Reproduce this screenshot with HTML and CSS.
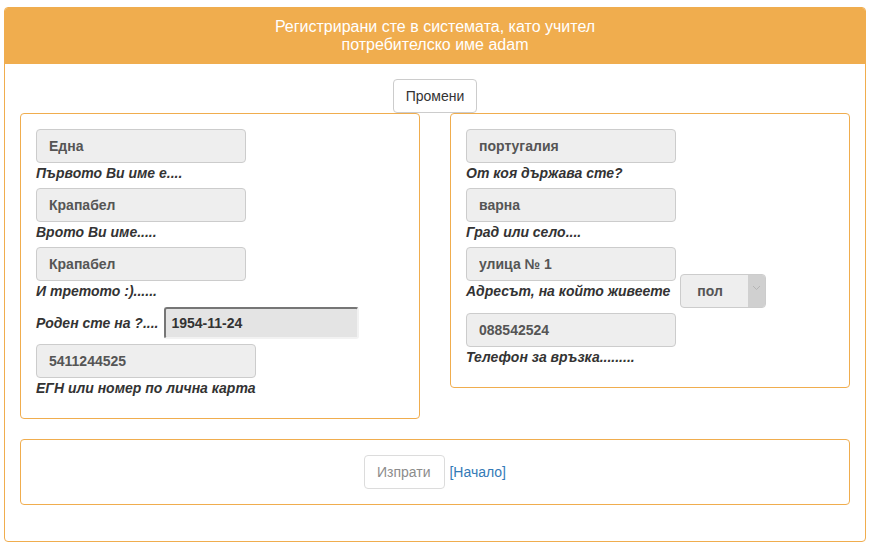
FILE: index.html
```html
<!DOCTYPE html>
<html lang="bg">
<head>
<meta charset="utf-8">
<title>Регистрация</title>
<link rel="stylesheet" href="styles.css">
</head>
<body>
<div class="panel">
  <div class="panel-heading">
    <h3 class="panel-title">Регистрирани сте в системата, като учител<br>потребителско име adam</h3>
  </div>
  <div class="panel-body">
    <div class="edit-row"><button class="btn" type="button">Промени</button></div>
    <div class="columns">
      <div class="box">
        <div class="group">
          <input class="field" type="text" value="Една" readonly>
          <label class="hint">Първото Ви име е....</label>
        </div>
        <div class="group">
          <input class="field" type="text" value="Крапабел" readonly>
          <label class="hint">Врото Ви име.....</label>
        </div>
        <div class="group">
          <input class="field" type="text" value="Крапабел" readonly>
          <label class="hint">И третото :)......</label>
        </div>
        <div class="group date-row">
          <label class="hint">Роден сте на ?....</label>
          <input class="date" type="text" value="1954-11-24" readonly>
        </div>
        <div class="group">
          <input class="field wide" type="text" value="5411244525" readonly>
          <label class="hint">ЕГН или номер по лична карта</label>
        </div>
      </div>
      <div class="box">
        <div class="group">
          <input class="field" type="text" value="португалия" readonly>
          <label class="hint">От коя държава сте?</label>
        </div>
        <div class="group">
          <input class="field" type="text" value="варна" readonly>
          <label class="hint">Град или село....</label>
        </div>
        <div class="group">
          <input class="field" type="text" value="улица № 1" readonly>
          <div class="address-row">
            <label class="hint">Адресът, на който живеете</label>
            <div class="select">
              <span class="select-value">пол</span>
              <span class="select-arrow"><svg width="9" height="6" viewBox="0 0 9 6"><path d="M1 1 L4.5 4.5 L8 1" fill="none" stroke="#b5b5b5" stroke-width="1"/></svg></span>
            </div>
          </div>
        </div>
        <div class="group">
          <input class="field" type="text" value="088542524" readonly>
          <label class="hint">Телефон за връзка.........</label>
        </div>
      </div>
    </div>
    <div class="box actions">
      <button class="btn btn-disabled" type="button">Изпрати</button> <a class="link" href="#">[Начало]</a>
    </div>
  </div>
</div>
</body>
</html>
```
FILE: styles.css
```css
* { box-sizing: border-box; }
html, body { margin: 0; background: #fff; }
body {
  padding: 7px 0 0 4px;
  font-family: "Liberation Sans", Arial, sans-serif;
  font-size: 14px;
  line-height: 20px;
  color: #333;
}
.panel {
  width: 862px;
  border: 1px solid #f0ad4e;
  border-radius: 4px;
  background: #fff;
}
.panel-heading {
  background: #f0ad4e;
  padding: 10px 15px 11px;
  border-radius: 3px 3px 0 0;
  text-align: center;
}
.panel-title {
  margin: 0;
  font-size: 16px;
  font-weight: normal;
  line-height: 1.1;
  color: #fff;
}
.panel-body {
  padding: 15px;
}
.edit-row {
  display: flex;
  justify-content: center;
}
.btn {
  font-family: "Liberation Sans", Arial, sans-serif;
  font-size: 14px;
  line-height: 20px;
  height: 34px;
  padding: 6px 12px;
  background: #fff;
  color: #333;
  border: 1px solid #ccc;
  border-radius: 4px;
  cursor: pointer;
}
.btn-disabled {
  color: #8c8c8c;
  border-color: #dcdcdc;
  padding: 6px 13px 6px 12px;
  cursor: not-allowed;
}
.columns {
  display: grid;
  grid-template-columns: 400px 400px;
  justify-content: space-between;
  align-items: start;
}
.box {
  border: 1px solid #f0ad4e;
  border-radius: 4px;
  padding: 15px;
}
.group {
  margin-bottom: 5px;
}
.field {
  display: block;
  width: 210px;
  height: 34px;
  padding: 6px 12px;
  font-family: "Liberation Sans", Arial, sans-serif;
  font-size: 14px;
  font-weight: bold;
  line-height: 20px;
  color: #555;
  background: #eee;
  border: 1px solid #ccc;
  border-radius: 4px;
  outline: none;
}
.field.wide { width: 220px; }
.hint {
  display: block;
  font-weight: bold;
  font-style: italic;
  line-height: 20px;
  color: #333;
  white-space: nowrap;
}
.date-row {
  display: flex;
  align-items: center;
  height: 33px;
}
.date-row .hint { margin-right: 6px; }
.date {
  width: 195px;
  height: 32px;
  padding: 0 0 0 5px;
  font-family: "Liberation Sans", Arial, sans-serif;
  font-size: 14px;
  font-weight: bold;
  color: #333;
  background: #e4e4e4;
  border-style: solid;
  border-width: 2px;
  border-color: #767676 #f2f2f2 #f2f2f2 #767676;
  border-radius: 3px;
  outline: none;
}
.address-row {
  display: flex;
  align-items: flex-start;
}
.select {
  display: flex;
  width: 86px;
  height: 34px;
  margin-top: -7px;
  margin-left: 10px;
  background: #eee;
  border: 1px solid #ccc;
  border-radius: 4px;
  overflow: hidden;
}
.select-value {
  flex: 1;
  padding: 6px 0 0 16px;
  font-weight: bold;
  color: #555;
}
.select-arrow {
  width: 17px;
  background: #d0d0d0;
  display: flex;
  justify-content: center;
  padding-top: 10px;
}
.select-arrow svg { display: block; }
.actions {
  margin-top: 20px;
  margin-bottom: 21px;
  text-align: center;
}
.link {
  margin-left: 1px;
  color: #337ab7;
  text-decoration: none;
}
```
